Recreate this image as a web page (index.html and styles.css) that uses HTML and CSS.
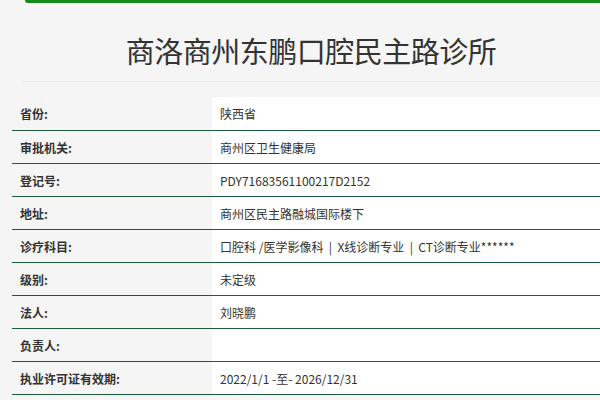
FILE: index.html
```html
<!DOCTYPE html>
<html lang="zh-CN">
<head>
<meta charset="utf-8">
<title>商洛商州东鹏口腔民主路诊所</title>
<link rel="stylesheet" href="styles.css">
</head>
<body>
<div class="page">
  <div class="header">
    <div class="topbar"></div>
    <h1 class="title">商洛商州东鹏口腔民主路诊所</h1>
  </div>
  <div class="info">
    <div class="row"><div class="label">省份:</div><div class="value">陕西省</div></div>
    <div class="row"><div class="label">审批机关:</div><div class="value">商州区卫生健康局</div></div>
    <div class="row"><div class="label">登记号:</div><div class="value">PDY71683561100217D2152</div></div>
    <div class="row"><div class="label">地址:</div><div class="value">商州区民主路融城国际楼下</div></div>
    <div class="row"><div class="label">诊疗科目:</div><div class="value">口腔科 /医学影像科 &nbsp;|&nbsp; X线诊断专业 &nbsp;|&nbsp; CT诊断专业******</div></div>
    <div class="row"><div class="label">级别:</div><div class="value">未定级</div></div>
    <div class="row"><div class="label">法人:</div><div class="value">刘晓鹏</div></div>
    <div class="row"><div class="label">负责人:</div><div class="value"></div></div>
    <div class="row"><div class="label">执业许可证有效期:</div><div class="value">2022/1/1 -至- 2026/12/31</div></div>
  </div>
</div>
</body>
</html>
```
FILE: styles.css
```css
html, body {
  margin: 0;
  padding: 0;
  background: #f5f5f5;
  font-family: "Noto Sans CJK SC", "Noto Sans", sans-serif;
  color: #333;
  overflow: hidden;
}
.page {
  padding-left: 12px;
}
.header {
  margin-left: 10px;
  border-bottom: 1px solid #e9e9e9;
}
.topbar {
  height: 3px;
  margin-left: 3px;
  background: #168a16;
  border-bottom-left-radius: 3px;
}
.title {
  margin: 0;
  padding-top: 18px;
  height: 60px;
  line-height: 58px;
  font-size: 29px;
  font-weight: normal;
  text-align: center;
  color: #333;
  letter-spacing: -0.5px;
}
.info {
  margin-top: 15px;
}
.row {
  display: grid;
  grid-template-columns: 200px 1fr;
  height: 32px;
  border-bottom: 1px solid #1f5a3d;
  font-size: 12px;
}
.row:first-child {
  height: 33px;
}
.label {
  display: flex;
  align-items: center;
  padding-left: 8px;
  font-weight: bold;
  color: #333;
}
.value {
  display: flex;
  align-items: center;
  padding-left: 8px;
  background: #fff;
  color: #333;
  white-space: pre;
}
```
